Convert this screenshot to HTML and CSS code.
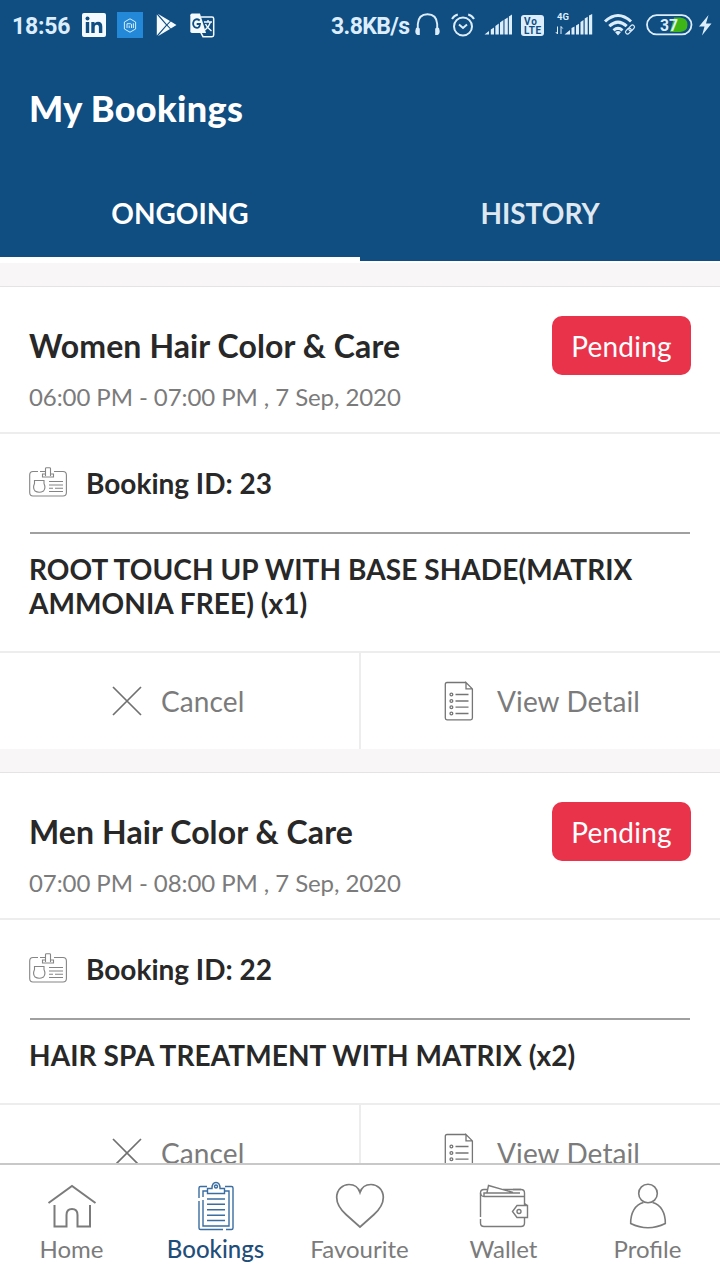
FILE: index.html
```
<!DOCTYPE html>
<html lang="en">
<head>
  <meta charset="UTF-8">
  <title>My Bookings</title>
  <link rel="stylesheet" href="styles.css">
</head>
<body>
  <!-- shared icons -->
  <svg class="sprite" width="0" height="0">
    <symbol id="icon-id" viewBox="0 0 38 30">
      <path d="M9 4.500H4Q.7 4.500.7 8V25.500Q.7 29 4 29H34Q37.400 29 37.400 25.500V8Q37.400 4.500 34 4.500H25M11 4.500H16"/>
      <path d="M16.500 9V1.500Q16.500.7 17.500.7H20.500Q21.500.7 21.500 1.500V9M16.500 7H13.500V10H24.500V7H21.500"/>
      <path d="M5.500 13.500H15V16.500Q17 21 14.500 24Q10 26.500 6 24Q3.500 21 5.500 16.500Z"/>
      <path d="M20 14.500H34M20 18H34M20 21.300H24M26 21.300H34M20 24.500H34"/>
    </symbol>
    <symbol id="icon-cross" viewBox="0 0 30 30">
      <path d="M1 1L29 29M29 1L1 29"/>
    </symbol>
    <symbol id="icon-doc" viewBox="0 0 30 40">
      <path d="M22 1.500H3Q1.300 1.500 1.300 3.200V37Q1.300 38.800 3 38.800H26.700Q28.400 38.800 28.400 37V7.900L22 1.500V7.900H28.400"/>
      <path d="M11.500 13.500H24.500M11.500 20H24.500M11.500 26.200H24.500M11.500 32.500H24.500"/>
      <circle cx="7.400" cy="13.500" r="1.400"/><circle cx="7.400" cy="20" r="1.400"/>
      <circle cx="7.400" cy="26.200" r="1.400"/><circle cx="7.400" cy="32.500" r="1.400"/>
    </symbol>
  </svg>

  <header class="header">
    <div class="status">
      <span class="clock">18:56</span>
      <svg class="linkedin" width="24" height="24" viewBox="0 0 24 24">
        <rect width="24" height="24" rx="2" fill="#f4faff"/>
        <circle cx="5.500" cy="5.500" r="2" fill="#104d81"/>
        <path d="M3.800 9H7.200V20H3.800ZM9.300 9H12.500V10.500Q13.600 8.700 16 8.700Q20.300 8.700 20.300 13.500V20H16.900V14.500Q16.900 11.700 14.900 11.700Q12.700 11.700 12.700 14.500V20H9.300Z" fill="#104d81"/>
      </svg>
      <svg class="mi" width="26" height="26" viewBox="0 0 26 26">
        <rect y="-1" width="26" height="26" fill="#2488d8"/>
        <path d="M13 5.800L18.600 9V16L13 19.200L7.400 16V9Z" fill="none" stroke="#d4efff"/>
        <path d="M10 15V10.700H13.500Q14.500 10.700 14.500 12V15M12.200 12.500V15M16.400 10.300V15" fill="none" stroke="#d4efff"/>
      </svg>
      <svg class="play" width="21" height="24" viewBox="0 0 21 24">
        <path d="M.8 1.500V22.500L10 12ZM1.800.8L10.800 11.200L14 8ZM1.800 23.200L10.800 12.800L14 16ZM14.800 8.400L11.500 12L14.800 15.600L20.500 12Z" fill="#f4faff"/>
      </svg>
      <svg class="translate" width="25" height="25" viewBox="0 0 25 25">
        <path d="M11 4H22Q23.700 4 23.700 5.700V22Q23.700 23.700 22 23.700H13L10 18" fill="none" stroke="#f4faff" stroke-width="1.500"/>
        <path d="M2 .5H10L16 20H2Q.3 20 .3 18.300V2.200Q.3.500 2 .5Z" fill="#f4faff"/>
        <path d="M9.700 7.500Q6.500 5 4 7.700Q2 11 4.500 14Q9.500 16.500 10 11H6.700" fill="none" stroke="#104d81" stroke-width="1.800"/>
        <path d="M14 9H22M18 7V9M20.500 9Q19 14 15 17M15.500 11Q17 14.500 21.500 18" fill="none" stroke="#f4faff" stroke-width="1.400"/>
      </svg>
      <span class="speed">3.8KB/s</span>
      <svg class="headphones" width="25" height="24" viewBox="0 0 25 24">
        <path d="M2.800 16V10Q3.500.2 12.500.2Q21.500.2 22.200 10V16" fill="none" stroke="#dceefe" stroke-width="1.900"/>
        <path d="M1 14Q2.500 12.800 4.800 14.500V21H2.500Q.3 20.500.3 17ZM24 14Q22.500 12.800 20.200 14.500V21H22.500Q24.700 20.500 24.700 17Z" fill="#dceefe"/>
      </svg>
      <svg class="alarm" width="24" height="24" viewBox="0 0 24 24">
        <circle cx="12" cy="12.500" r="9" fill="none" stroke="#dceefe" stroke-width="2"/>
        <path d="M1 5Q3 1.500 6.800.5M23 5Q21 1.500 17.200.5M8 10.500L12 14L16 10.500" fill="none" stroke="#dceefe" stroke-width="2"/>
      </svg>
      <svg class="signal" width="29" height="22" viewBox="0 0 29 22">
        <path d="M.5 20.500L5 17V20.500ZM6.800 15.500L10 13.500V20.500H6.800ZM11.400 12L14.800 9.500V20.500H11.400ZM16 8.500L19.400 6V20.500H16ZM20.500 5.500L23.800 3.500V20.500H20.500ZM24.900 2.500L28 .5V20.500H24.900Z" fill="#dceefe"/>
      </svg>
      <svg class="volte" width="23" height="21" viewBox="0 0 23 21">
        <rect width="23" height="21" rx="3" fill="#dceefe"/>
        <text x="3" y="9.500" font-size="10" textLength="13">Vo</text>
        <text x="3" y="18.500" font-size="10" textLength="17">LTE</text>
      </svg>
      <svg class="signal-4g" width="38" height="26" viewBox="0 0 38 26">
        <text x="2" y="8" font-size="9.500">4G</text>
        <path d="M2.500 14.500V22M.8 20L2.500 22M6 22V14.500L7.700 16.500" fill="none" stroke="#dceefe"/>
        <path d="M9.500 22.500L15 18V22.500ZM16.500 16L19.500 14.500V22.500H16.500ZM21 13.500L24 11.700V22.500H21ZM25.500 10L28.500 8V22.500H25.500ZM29.700 6.500L32.700 4.800V22.500H29.700ZM34 3.500L37.200 2V22.500H34Z" fill="#dceefe"/>
      </svg>
      <svg class="wifi" width="33" height="23" viewBox="0 0 33 23">
        <path d="M1 7.500Q14 -4.500 27 7.500M5.300 12.200Q14 4 22.700 12.200M9.500 16.300Q14 12.500 18.500 16.300" fill="none" stroke="#dceefe" stroke-width="3"/>
        <path d="M11 18Q14 16 17 18L14 21.500Z" fill="#dceefe"/>
        <g fill="none" stroke="#dceefe" stroke-width="1.200" transform="rotate(-45 26 15.500)">
          <rect x="20.500" y="13.500" width="6.500" height="4" rx="2"/>
          <rect x="25" y="13.500" width="6.500" height="4" rx="2"/>
        </g>
      </svg>
      <svg class="battery" width="47" height="22" viewBox="0 0 47 22">
        <rect x="1" y="1.200" width="44.500" height="19.200" rx="9.600" fill="none" stroke="#dceefe" stroke-width="1.800"/>
        <path d="M28 3.500H34Q41.500 4 41.500 10.800T34 18H24Z" fill="#3fb618"/>
        <text x="14" y="17" font-size="17" textLength="18" lengthAdjust="spacingAndGlyphs">37</text>
      </svg>
      <svg class="bolt" width="13" height="21" viewBox="0 0 13 21">
        <path d="M9.500 0L0 11.500H5.500L3 20.500L12.500 8.500H7Z" fill="#dceefe"/>
      </svg>
    </div>
    <h1>My Bookings</h1>
    <nav class="tabs">
      <a class="tab active">ONGOING</a>
      <a class="tab">HISTORY</a>
    </nav>
  </header>

  <main class="list">
    <section class="card">
      <div class="card-head">
        <div>
          <h2>Women Hair Color &amp; Care</h2>
          <p class="time">06:00 PM - 07:00 PM , 7 Sep, 2020</p>
        </div>
        <span class="badge">Pending</span>
      </div>
      <div class="card-body">
        <div class="booking-id">
          <svg class="icon-id"><use href="#icon-id"/></svg>
          <span>Booking ID: 23</span>
        </div>
        <p class="service">ROOT TOUCH UP WITH BASE SHADE(MATRIX AMMONIA FREE) (x1)</p>
      </div>
      <div class="actions">
        <a class="action"><svg class="icon-cross"><use href="#icon-cross"/></svg><span>Cancel</span></a>
        <a class="action"><svg class="icon-doc"><use href="#icon-doc"/></svg><span>View Detail</span></a>
      </div>
    </section>

    <section class="card">
      <div class="card-head">
        <div>
          <h2>Men Hair Color &amp; Care</h2>
          <p class="time">07:00 PM - 08:00 PM , 7 Sep, 2020</p>
        </div>
        <span class="badge">Pending</span>
      </div>
      <div class="card-body">
        <div class="booking-id">
          <svg class="icon-id"><use href="#icon-id"/></svg>
          <span>Booking ID: 22</span>
        </div>
        <p class="service">HAIR SPA TREATMENT WITH MATRIX (x2)</p>
      </div>
      <div class="actions">
        <a class="action"><svg class="icon-cross"><use href="#icon-cross"/></svg><span>Cancel</span></a>
        <a class="action"><svg class="icon-doc"><use href="#icon-doc"/></svg><span>View Detail</span></a>
      </div>
    </section>
  </main>

  <nav class="bottom-nav">
    <a class="nav-item">
      <svg width="50" height="50" viewBox="0 0 50 50" stroke-width="2">
        <path d="M1.500 20L25 3L48.500 20M7.500 22V43.500H19.500V32Q19.500 26 25 26T30.500 32V43.500H43V22"/>
      </svg>
      <span>Home</span>
    </a>
    <a class="nav-item active">
      <svg width="50" height="50" viewBox="0 0 50 50" stroke-width="1.400">
        <path d="M16 3.500H9.500Q8 3.500 8 5V15M8 18V45Q8 46.500 9.500 46.500H32M35 46.500H40.500Q42 46.500 42 45V5Q42 3.500 40.500 3.500H34"/>
        <path d="M16 8H12V14M12 17V43H38V8H34"/>
        <path d="M16.500 10.500V5.500H21Q21-.5 25-.5T29 5.500H33.500V10.500Z"/>
        <circle cx="25" cy="3.500" r="1.500"/>
        <path d="M16 16H34M16 21.300H34M16 26.700H34M16 32.200H34M16 37.500H34"/>
      </svg>
      <span>Bookings</span>
    </a>
    <a class="nav-item">
      <svg width="50" height="50" viewBox="0 0 50 50" stroke-width="1.700">
        <path d="M25 44L11 31.500Q1.700 23 1.700 14.500C1.700 6 8 1.500 14 1.500Q22.500 1.500 25 9.500Q27.500 1.500 36 1.500C42 1.500 48.300 6 48.300 14.500Q48.300 23 39 31.500Z"/>
      </svg>
      <span>Favourite</span>
    </a>
    <a class="nav-item">
      <svg width="50" height="50" viewBox="0 0 50 50" stroke-width="1.400">
        <path d="M8 6.500H5Q1.500 6.500 1.500 10V34M1.500 36V40Q1.500 43.500 5 43.500H42Q45.500 43.500 45.500 40V34M45.500 22V10Q45.500 6.500 42 6.500H34"/>
        <path d="M1.500 10Q2 13.500 5 13.500H45M8 10H5V13.500M8 10H41M8 9.500L9.500 2.500L34 9.500M24 6.500H42"/>
        <path d="M48.500 22.500H38L33.500 28.500L38 34.500H48.500ZM45.500 20.500L48.500 22.500"/>
        <circle cx="40" cy="28.500" r="2"/>
      </svg>
      <span>Wallet</span>
    </a>
    <a class="nav-item">
      <svg width="50" height="50" viewBox="0 0 50 50" stroke-width="1.600">
        <circle cx="25" cy="10.500" r="9.300"/>
        <path d="M20.500 19.500C12 21.500 7.500 30 7.700 40.500Q25 49 42.300 40.500C42.500 30 38 21.500 29.500 19.500"/>
      </svg>
      <span>Profile</span>
    </a>
  </nav>
</body>
</html>
```
FILE: styles.css
```
* { box-sizing: border-box; }
body { margin: 0; width: 720px; height: 1280px; overflow: hidden; display: flex; flex-direction: column; font-family: Lato, sans-serif; background: #f8f6f7; color: #282828; }
h1, h2, p { margin: 0; }
svg { flex: none; display: block; overflow: visible; }
.sprite { position: absolute; }

.header { flex: none; height: 261px; background: #104d81; color: #fff; display: flex; flex-direction: column; }
.status { flex: none; height: 50px; display: flex; align-items: center; padding: 2px 0 0 12px; font-family: Roboto, sans-serif; font-weight: 700; font-size: 23px; letter-spacing: -0.2px; color: #dceefe; white-space: nowrap; }
.status text { font-family: Roboto, sans-serif; font-weight: 700; letter-spacing: 0; fill: #dceefe; }
.status .volte text { fill: #104d81; }
.clock { width: 70px; }
.linkedin, .play, .translate { margin-top: -2px; }
.mi { margin-left: 11px; }
.play { margin-left: 13px; }
.translate { margin-left: 13px; }
.speed { width: 84px; margin-left: 116px; letter-spacing: -0.6px; }
.alarm { margin-left: 11px; }
.signal { margin-left: 9px; }
.volte { margin: -2px 0 0 8px; }
.signal-4g { margin-left: 11px; }
.signal, .signal-4g, .wifi, .battery, .bolt { margin-top: -2px; }
.wifi { margin-left: 11px; }
.battery { margin-left: 9px; }
.bolt { margin-left: 6px; }

h1 { flex: none; height: 117px; padding-left: 29px; line-height: 117px; font-size: 36px; font-weight: 900; letter-spacing: 0.35px; }
.tabs { flex: 1; display: flex; }
.tab { flex: 1; text-align: center; font-size: 28px; font-weight: 700; line-height: 88px; padding-top: 2px; color: #dfe8f0; }
.tab.active { color: #fff; border-bottom: 4px solid #fff; }

.list { flex: 1; min-height: 0; overflow: hidden; border-top: 2px solid #fff; padding-top: 23px; }
.card { background: #fff; border-top: 1px solid #e5e3e4; margin-bottom: 23px; }
.card-head { height: 147px; display: flex; justify-content: space-between; align-items: flex-start; padding: 29px 29px 0; border-bottom: 2px solid #ededed; }
h2 { font-size: 32px; line-height: 60px; font-weight: 700; letter-spacing: 0.1px; }
.time { font-size: 24px; line-height: 42px; letter-spacing: -0.08px; color: #7b7b7b; }
.badge { width: 139px; height: 59px; border-radius: 10px; background: #e9334b; color: #fff; text-align: center; font-size: 28px; line-height: 61px; letter-spacing: 0.2px; }
.card-body { padding: 0 30px 31px; }
.booking-id { height: 100px; display: flex; align-items: center; gap: 19px; border-bottom: 2px solid #a0a0a0; font-size: 28px; font-weight: 700; }
.booking-id svg { margin: -2px 0 0 -1px; }
.service { margin: 18px -1px 0; font-size: 28px; line-height: 34px; font-weight: 700; letter-spacing: 0.08px; }
.actions { display: grid; grid-template-columns: 359px 361px; height: 98px; border-top: 2px solid #ededed; }
.action { display: flex; align-items: center; padding-left: 112px; font-size: 28px; letter-spacing: 0.1px; color: #7b7b7b; }
.action + .action { border-left: 2px solid #ededed; padding-left: 83px; }
.icon-id { width: 38px; height: 30px; fill: none; stroke: #858585; stroke-width: 1.1; }
.icon-cross { width: 30px; height: 30px; margin-right: 19px; fill: none; stroke: #707070; stroke-width: 1.7; }
.icon-doc { width: 30px; height: 40px; margin-right: 23px; fill: none; stroke: #757575; stroke-width: 1.3; }

.bottom-nav { flex: none; height: 117px; display: flex; background: #fff; border-top: 2px solid #c8c8c8; }
.nav-item { flex: 1; display: flex; flex-direction: column; align-items: center; padding-top: 18px; font-size: 24px; line-height: 32px; color: #7b7b7b; }
.nav-item span { margin-left: -1px; }
.nav-item svg { fill: none; stroke: #7b7b7b; }
.nav-item.active { color: #1f4e7a; font-weight: 500; }
.nav-item.active svg { stroke: #3a6da0; }
```
